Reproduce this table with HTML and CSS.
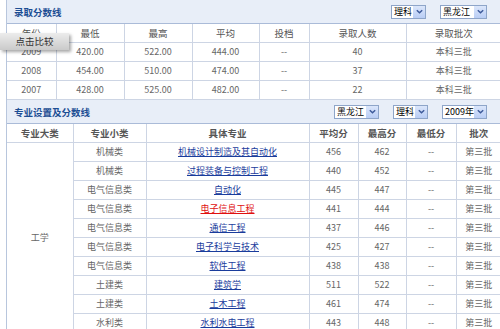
FILE: index.html
```html
<!DOCTYPE html>
<html>
<head>
<meta charset="utf-8">
<link rel="stylesheet" href="styles.css">
</head>
<body>
<div class="wrap">
  <div class="bar">
    <span class="bar-title">录取分数线</span>
    <div class="bar-tools">
      <span class="sel w34"><span class="sel-txt">理科</span><span class="sel-btn"><svg viewBox="0 0 10 10" width="9" height="9"><path d="M2 3.5 L5 6.5 L8 3.5" fill="none" stroke="#3d5a9a" stroke-width="1.6"/></svg></span></span>
      <span class="sel w47"><span class="sel-txt">黑龙江</span><span class="sel-btn"><svg viewBox="0 0 10 10" width="9" height="9"><path d="M2 3.5 L5 6.5 L8 3.5" fill="none" stroke="#3d5a9a" stroke-width="1.6"/></svg></span></span>
    </div>
  </div>
  <table class="grid t1">
    <colgroup><col style="width:49px"><col style="width:68px"><col style="width:68px"><col style="width:67px"><col style="width:50px"><col style="width:97px"><col style="width:95px"></colgroup>
    <tr class="head"><td>年份</td><td>最低</td><td>最高</td><td>平均</td><td>投档</td><td>录取人数</td><td>录取批次</td></tr>
    <tr><td>2009</td><td>420.00</td><td>522.00</td><td>444.00</td><td>--</td><td>40</td><td>本科三批</td></tr>
    <tr><td>2008</td><td>454.00</td><td>510.00</td><td>474.00</td><td>--</td><td>37</td><td>本科三批</td></tr>
    <tr><td>2007</td><td>428.00</td><td>525.00</td><td>482.00</td><td>--</td><td>22</td><td>本科三批</td></tr>
  </table>
  <div class="bar">
    <span class="bar-title">专业设置及分数线</span>
    <div class="bar-tools">
      <span class="sel w45b"><span class="sel-txt">黑龙江</span><span class="sel-btn"><svg viewBox="0 0 10 10" width="9" height="9"><path d="M2 3.5 L5 6.5 L8 3.5" fill="none" stroke="#3d5a9a" stroke-width="1.6"/></svg></span></span>
      <span class="sel w34"><span class="sel-txt">理科</span><span class="sel-btn"><svg viewBox="0 0 10 10" width="9" height="9"><path d="M2 3.5 L5 6.5 L8 3.5" fill="none" stroke="#3d5a9a" stroke-width="1.6"/></svg></span></span>
      <span class="sel w45"><span class="sel-txt">2009年</span><span class="sel-btn"><svg viewBox="0 0 10 10" width="9" height="9"><path d="M2 3.5 L5 6.5 L8 3.5" fill="none" stroke="#3d5a9a" stroke-width="1.6"/></svg></span></span>
    </div>
  </div>
  <table class="grid t2">
    <colgroup><col style="width:66px"><col style="width:73px"><col style="width:163px"><col style="width:49px"><col style="width:48px"><col style="width:50px"><col style="width:45px"></colgroup>
    <tr class="head bold"><td>专业大类</td><td>专业小类</td><td>具体专业</td><td>平均分</td><td>最高分</td><td>最低分</td><td>批次</td></tr>
    <tr><td rowspan="10">工学</td><td>机械类</td><td><a class="lk">机械设计制造及其自动化</a></td><td>456</td><td>462</td><td>--</td><td>第三批</td></tr>
    <tr><td>机械类</td><td><a class="lk">过程装备与控制工程</a></td><td>440</td><td>452</td><td>--</td><td>第三批</td></tr>
    <tr><td>电气信息类</td><td><a class="lk">自动化</a></td><td>445</td><td>447</td><td>--</td><td>第三批</td></tr>
    <tr><td>电气信息类</td><td><a class="lk red">电子信息工程</a></td><td>441</td><td>444</td><td>--</td><td>第三批</td></tr>
    <tr><td>电气信息类</td><td><a class="lk">通信工程</a></td><td>437</td><td>446</td><td>--</td><td>第三批</td></tr>
    <tr><td>电气信息类</td><td><a class="lk">电子科学与技术</a></td><td>425</td><td>427</td><td>--</td><td>第三批</td></tr>
    <tr><td>电气信息类</td><td><a class="lk">软件工程</a></td><td>438</td><td>438</td><td>--</td><td>第三批</td></tr>
    <tr><td>土建类</td><td><a class="lk">建筑学</a></td><td>511</td><td>522</td><td>--</td><td>第三批</td></tr>
    <tr><td>土建类</td><td><a class="lk">土木工程</a></td><td>461</td><td>474</td><td>--</td><td>第三批</td></tr>
    <tr><td>水利类</td><td><a class="lk">水利水电工程</a></td><td>443</td><td>448</td><td>--</td><td>第三批</td></tr>
  </table>
</div>
<div class="compare">点击比较</div>
</body>
</html>
```
FILE: styles.css
```css
html, body {
  margin: 0;
  padding: 0;
  background: #fff;
}
body {
  width: 500px;
  height: 329px;
  overflow: hidden;
  position: relative;
  font-family: "Noto Sans CJK SC", "Noto Sans", sans-serif;
  font-size: 9px;
  color: #666;
}
.wrap {
  margin-left: 6px;
  border-left: 1px solid #b8c6dd;
}
.bar {
  height: 23px;
  background: #e8eef8;
  border-bottom: 1px solid #aabbd8;
  display: flex;
  align-items: center;
  justify-content: space-between;
  padding: 0 13px 0 7px;
}
.bar-title {
  font-weight: bold;
  color: #1d4e94;
  font-size: 9.5px;
}
.bar-tools {
  display: flex;
  gap: 14px;
  align-items: center;
}
.sel {
  display: flex;
  align-items: stretch;
  height: 14px;
  border: 1px solid #8ea5c9;
  background: #fff;
  box-sizing: border-box;
}
.sel-txt {
  flex: 1;
  font-size: 9px;
  line-height: 12px;
  color: #000;
  padding-left: 2px;
  white-space: nowrap;
  overflow: hidden;
}
.sel-btn {
  width: 12px;
  background: linear-gradient(#dbe6fb, #b9cdf5);
  display: flex;
  align-items: center;
  justify-content: center;
}
.w34 { width: 35px; }
.w47 { width: 47px; }
.w45 { width: 45px; }
.w45b { width: 45px; }
.grid {
  border-collapse: collapse;
  table-layout: fixed;
  width: 494px;
}
.grid td {
  border: 1px solid #cdd5e4;
  border-top: none;
  height: 18px;
  padding: 0;
  text-align: center;
  line-height: 18px;
  white-space: nowrap;
  overflow: hidden;
  font-size: 9px;
}
.grid tr td:first-child { border-left: none; }
.grid tr td:last-child { border-right: none; }
.grid .head td { color: #555; font-size: 9.5px; }
.grid .bold td { font-weight: bold; }
.lk {
  color: #1a3c9c;
  text-decoration: underline;
}
.lk.red { color: #e01010; }
.compare {
  position: absolute;
  left: 0;
  top: 33px;
  width: 69px;
  height: 17px;
  line-height: 17px;
  text-align: center;
  font-size: 9.5px;
  color: #333;
  background: linear-gradient(#ececec, #cacaca);
  box-shadow: 2px 2px 3px rgba(0,0,0,0.35);
}
```
